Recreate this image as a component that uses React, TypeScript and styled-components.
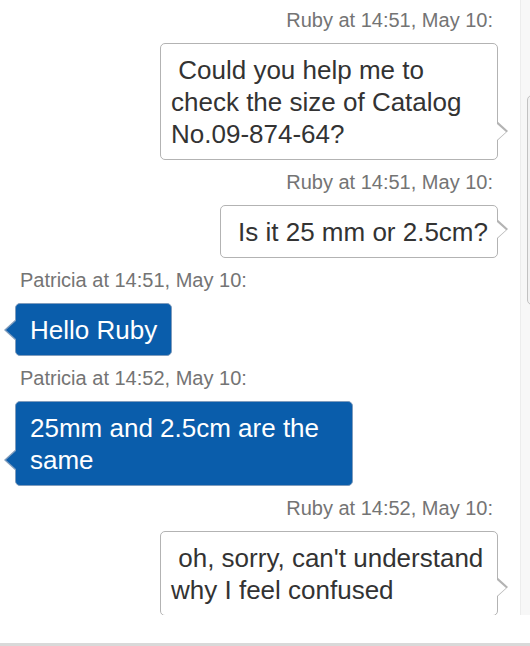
import React from "react";
import styled, { createGlobalStyle, css } from "styled-components";

const GlobalStyle = createGlobalStyle`
  html, body {
    margin: 0;
    padding: 0;
    background: #ffffff;
    font-family: "Liberation Sans", Arial, Helvetica, sans-serif;
  }
  * { box-sizing: border-box; }
`;

type Msg = { id: number; author: string; time: string; text: string; mine: boolean };

const messages: Msg[] = [
  { id: 1, author: "Ruby", time: "14:51, May 10", text: " Could you help me to check the size of Catalog No.09-874-64?", mine: true },
  { id: 2, author: "Ruby", time: "14:51, May 10", text: " Is it 25 mm or 2.5cm?", mine: true },
  { id: 3, author: "Patricia", time: "14:51, May 10", text: "Hello Ruby", mine: false },
  { id: 4, author: "Patricia", time: "14:52, May 10", text: "25mm and 2.5cm are the same", mine: false },
  { id: 5, author: "Ruby", time: "14:52, May 10", text: " oh, sorry, can't understand why I feel confused", mine: true },
];

const Page = styled.div`
  width: 530px;
  height: 646px;
  display: flex;
  flex-direction: column;
  overflow: hidden;
  background: #fff;
`;

const ChatViewport = styled.div`
  flex: none;
  height: 615px;
  display: flex;
  flex-direction: row;
  overflow: hidden;
`;

const MessageList = styled.div`
  flex: 1;
  display: flex;
  flex-direction: column;
  gap: 10px;
  padding: 8px 22px 0 15px;
  overflow: hidden;
`;

const Message = styled.div<{ $mine: boolean }>`
  flex: none;
  display: flex;
  flex-direction: column;
  align-items: ${(p) => (p.$mine ? "flex-end" : "flex-start")};
`;

const Meta = styled.div`
  font-size: 20px;
  line-height: 24px;
  color: #747474;
  padding: 0 5px;
  margin-bottom: 11px;
`;

const mineBubble = css`
  background: #ffffff;
  border: 1px solid #b3b3b3;
  color: #333333;
  padding: 10px 9px 9px 10px;

  &::before {
    content: "";
    position: absolute;
    right: -11px;
    bottom: 18px;
    border-top: 10px solid transparent;
    border-bottom: 10px solid transparent;
    border-left: 11px solid #b3b3b3;
  }
  &::after {
    content: "";
    position: absolute;
    right: -9px;
    bottom: 19.5px;
    border-top: 8.5px solid transparent;
    border-bottom: 8.5px solid transparent;
    border-left: 9.5px solid #ffffff;
  }
`;

const theirBubble = css`
  background: #0a5dab;
  border: 1px solid #7f9cbd;
  color: #ffffff;
  padding: 10px 14px 9px;

  &::before {
    content: "";
    position: absolute;
    left: -12px;
    bottom: 14px;
    border-top: 11px solid transparent;
    border-bottom: 11px solid transparent;
    border-right: 12px solid #7f9cbd;
  }
  &::after {
    content: "";
    position: absolute;
    left: -10.5px;
    bottom: 15px;
    border-top: 10px solid transparent;
    border-bottom: 10px solid transparent;
    border-right: 11px solid #0a5dab;
  }
`;

const Bubble = styled.div<{ $mine: boolean }>`
  position: relative;
  max-width: 338px;
  border-radius: 5px;
  font-size: 26px;
  line-height: 32px;
  white-space: pre-wrap;
  ${(p) => (p.$mine ? mineBubble : theirBubble)}
`;

const ScrollTrack = styled.div`
  position: relative;
  width: 10px;
  flex: none;
  background: #f7f7f7;
  border-left: 1px solid #ececec;
`;

const ScrollThumb = styled.div`
  position: absolute;
  top: 95px;
  left: 6px;
  width: 10px;
  height: 210px;
  border: 1px solid #c2c2c2;
  border-radius: 5px;
  background: #f2f2f2;
`;

const Footer = styled.div`
  flex: 1;
  min-height: 0;
  overflow: hidden;
  padding-top: 28px;
  background: #ffffff;
`;

const ComposerBar = styled.div`
  height: 40px;
  background: #d9d9d9;
`;

export default function App() {
  return (
    <>
      <GlobalStyle />
      <Page>
        <ChatViewport>
          <MessageList>
            {messages.map((m) => (
              <Message key={m.id} $mine={m.mine}>
                <Meta>
                  {m.author} at {m.time}:
                </Meta>
                <Bubble $mine={m.mine}>{m.text}</Bubble>
              </Message>
            ))}
          </MessageList>
          <ScrollTrack>
            <ScrollThumb />
          </ScrollTrack>
        </ChatViewport>
        <Footer>
          <ComposerBar />
        </Footer>
      </Page>
    </>
  );
}
